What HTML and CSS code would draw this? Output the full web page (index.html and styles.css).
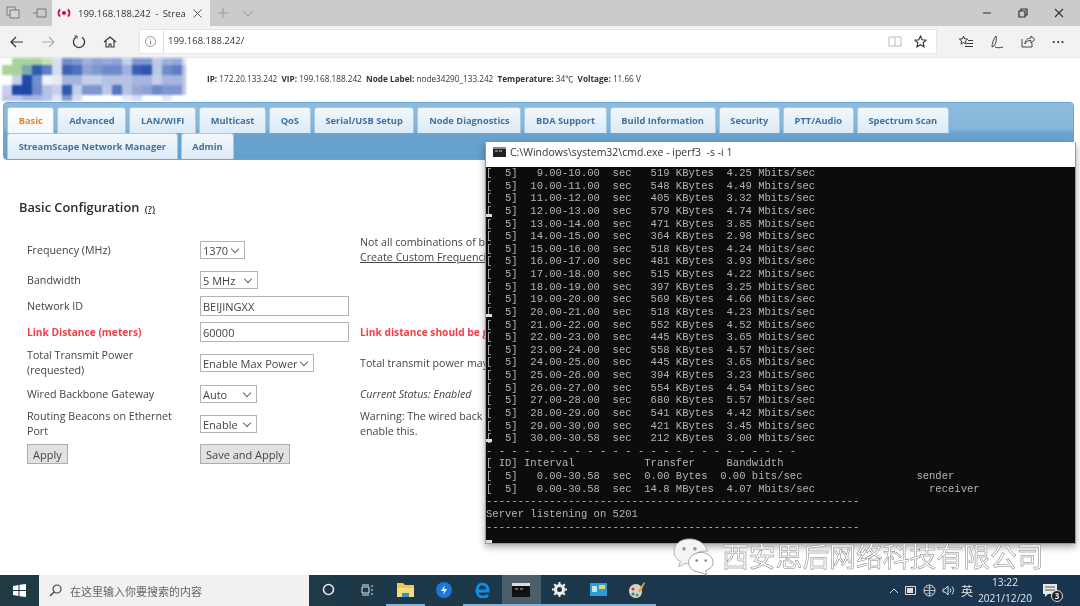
FILE: index.html
```html
<!DOCTYPE html>
<html lang="en">
<head>
    <meta charset="UTF-8">
    <title>199.168.188.242 - StreamScape</title>
    <link rel="stylesheet" href="styles.css">
</head>
<body>
<div class="screen">
    <!-- browser chrome -->
    <div class="tabstrip">
        <svg class="strip-icon" width="16" height="14" viewBox="0 0 16 14"><path d="M2 1h8v3M2 1v8h3M5 4h9v8H5z" fill="#d4d4d4" stroke="#777"/></svg>
        <svg class="strip-icon second" width="16" height="14" viewBox="0 0 16 14"><path d="M1 7h4M5 3h9v8H5z" fill="none" stroke="#777"/></svg>
        <div class="browser-tab">
            <svg width="14" height="10" viewBox="0 0 14 10"><circle cx="7" cy="5" r="2" fill="#c8103c"/><path d="M3 1.500a5 5 0 0 0 0 7M11 1.500a5 5 0 0 1 0 7" fill="none" stroke="#c8103c" stroke-width="2"/></svg>
            <span class="tab-title">199.168.188.242 - Strea</span>
            <svg width="9" height="9" viewBox="0 0 9 9"><path d="M.5.5l8 8M8.500.5l-8 8" stroke="#555"/></svg>
        </div>
        <svg class="new-tab" width="12" height="12" viewBox="0 0 12 12"><path d="M6 1v10M1 6h10" stroke="#999"/></svg>
        <svg class="tab-list" width="12" height="7" viewBox="0 0 12 7"><path d="M1 1l5 5 5-5" fill="none" stroke="#999"/></svg>
        <div class="win-buttons">
            <svg width="10" height="10" viewBox="0 0 10 10"><path d="M1 5h8" stroke="#444" stroke-width="1.200"/></svg>
            <svg width="10" height="10" viewBox="0 0 10 10"><path d="M1 3h6v6H1zM3 3V1h6v6H7" fill="none" stroke="#333" stroke-width="1.200"/></svg>
            <svg width="10" height="10" viewBox="0 0 10 10"><path d="M1 1l8 8M9 1l-8 8" stroke="#333" stroke-width="1.100"/></svg>
        </div>
    </div>
    <div class="toolbar">
        <svg class="nav-icon" width="14" height="12" viewBox="0 0 14 12"><path d="M13 6H1M6 1L1 6l5 5" fill="none" stroke="#333" stroke-width="1.200"/></svg>
        <svg class="nav-icon" width="14" height="12" viewBox="0 0 14 12"><path d="M1 6h12M8 1l5 5-5 5" fill="none" stroke="#aaa" stroke-width="1.100"/></svg>
        <svg class="nav-icon" width="14" height="14" viewBox="0 0 14 14"><path d="M4 2.200a5.600 5.600 0 1 0 6 0" fill="none" stroke="#333" stroke-width="1.200"/><path d="M2.500 1h2.500v2.500" fill="none" stroke="#333"/></svg>
        <svg class="nav-icon" width="14" height="14" viewBox="0 0 14 14"><path d="M1 7l6-5 6 5M3 6v6h3V9h2v3h3V6" fill="none" stroke="#333" stroke-width="1.100"/></svg>
        <div class="address">
            <svg width="11" height="11" viewBox="0 0 11 11"><circle cx="5.500" cy="5.500" r="5" fill="none" stroke="#999"/><path d="M5.500 4.500v4M5.500 2.500v1" stroke="#888"/></svg>
            <span class="url">199.168.188.242/</span>
            <svg class="addr-book" width="14" height="11" viewBox="0 0 14 11"><path d="M1 1h12v9H1zM7 1v9" fill="none" stroke="#bbb"/></svg>
            <svg width="13" height="13" viewBox="0 0 13 13"><path d="M6.500 1l1.700 3.700 4 .4-3 2.700.9 4-3.600-2.100-3.600 2.100.9-4-3-2.700 4-.4z" fill="none" stroke="#333" stroke-width="1.100"/></svg>
        </div>
        <div class="tools">
            <svg width="14" height="13" viewBox="0 0 14 13"><path d="M4.500 1l1.200 2.800 3 .3-2.200 2 .6 3-2.600-1.600L2 9.100l.6-3-2.200-2 3-.3zM9 5.500h5M8 8.500h6M6 11.500h8" fill="none" stroke="#333"/></svg>
            <svg width="14" height="14" viewBox="0 0 14 14"><path d="M6 1C3 5 2 9 2 12l2-1c2-3 3-6 2-10zM5 12c2 1 5 1 8 0" fill="none" stroke="#444"/></svg>
            <svg width="14" height="13" viewBox="0 0 14 13"><path d="M1 4v8h10V8M4 9c0-4 3-6 6-6V1l4 3.500L10 8V5.500c-3 0-5 1-6 3.500z" fill="none" stroke="#444"/></svg>
            <span class="more">&middot;&middot;&middot;</span>
        </div>
    </div>

    <!-- device page -->
    <div class="page">
        <div class="page-head">
            <!-- logo is pixelated in the screenshot -->
            <svg class="logo-mosaic" width="186" height="44" viewBox="0 0 186 44" shape-rendering="crispEdges">
                <g>
                    <rect x="12" y="0" width="30" height="7" fill="#a9d39a"/><rect x="42" y="0" width="10" height="7" fill="#c5dfbd"/><rect x="52" y="0" width="10" height="7" fill="#d8deef"/><rect x="62" y="0" width="10" height="7" fill="#6f8acb"/><rect x="72" y="0" width="10" height="7" fill="#7f97d0"/><rect x="82" y="0" width="10" height="7" fill="#9fb0dd"/><rect x="92" y="0" width="10" height="7" fill="#8ea2d5"/><rect x="102" y="0" width="10" height="7" fill="#98a9d9"/><rect x="112" y="0" width="10" height="7" fill="#8ea2d5"/><rect x="122" y="0" width="10" height="7" fill="#c5cfe9"/><rect x="132" y="0" width="20" height="7" fill="#7f97d0"/><rect x="152" y="0" width="10" height="7" fill="#bcc8e6"/><rect x="162" y="0" width="10" height="7" fill="#9fb0dd"/><rect x="172" y="0" width="10" height="7" fill="#98a9d9"/><rect x="182" y="0" width="4" height="7" fill="#d5dcef"/>
                </g>
                <g>
                    <rect x="2" y="7" width="20" height="10" fill="#a9d39a"/><rect x="22" y="7" width="10" height="10" fill="#7ea6b4"/><rect x="32" y="7" width="10" height="10" fill="#2f5cad"/><rect x="42" y="7" width="10" height="10" fill="#5f7dc3"/><rect x="52" y="7" width="10" height="10" fill="#d5dcef"/><rect x="62" y="7" width="10" height="10" fill="#3f62b5"/><rect x="72" y="7" width="10" height="10" fill="#4f70bc"/><rect x="82" y="7" width="10" height="10" fill="#8ea2d5"/><rect x="92" y="7" width="10" height="10" fill="#7f97d0"/><rect x="102" y="7" width="20" height="10" fill="#6f8acb"/><rect x="122" y="7" width="10" height="10" fill="#a0b0dd"/><rect x="132" y="7" width="10" height="10" fill="#3a60b5"/><rect x="142" y="7" width="10" height="10" fill="#2e54ab"/><rect x="152" y="7" width="10" height="10" fill="#bcc8e6"/><rect x="162" y="7" width="10" height="10" fill="#6f8acb"/><rect x="172" y="7" width="10" height="10" fill="#5f7dc3"/><rect x="182" y="7" width="4" height="10" fill="#b5c2e3"/>
                </g>
                <g>
                    <rect x="12" y="17" width="10" height="10" fill="#c5d0ea"/><rect x="22" y="17" width="10" height="10" fill="#1f49a6"/><rect x="32" y="17" width="10" height="10" fill="#6f8fd0"/><rect x="42" y="17" width="10" height="10" fill="#f0f3fa"/><rect x="52" y="17" width="10" height="10" fill="#e5e9f5"/><rect x="62" y="17" width="20" height="10" fill="#a5b5de"/><rect x="82" y="17" width="20" height="10" fill="#c5cfe9"/><rect x="102" y="17" width="30" height="10" fill="#b5c2e3"/><rect x="132" y="17" width="20" height="10" fill="#a5b5de"/><rect x="152" y="17" width="10" height="10" fill="#c5cfe9"/><rect x="162" y="17" width="20" height="10" fill="#a5b5de"/><rect x="182" y="17" width="4" height="10" fill="#bcc8e6"/>
                </g>
                <g>
                    <rect x="2" y="27" width="10" height="10" fill="#c5d0ea"/><rect x="12" y="27" width="10" height="10" fill="#1f49a6"/><rect x="22" y="27" width="10" height="10" fill="#1c47a5"/><rect x="32" y="27" width="10" height="10" fill="#6f8acb"/><rect x="42" y="27" width="10" height="10" fill="#b5c2e3"/><rect x="52" y="27" width="10" height="10" fill="#c5cfe9"/><rect x="62" y="27" width="10" height="10" fill="#2f59ae"/><rect x="72" y="27" width="10" height="10" fill="#c5cfe9"/><rect x="82" y="27" width="20" height="10" fill="#7f97d0"/><rect x="102" y="27" width="10" height="10" fill="#bcc8e6"/><rect x="112" y="27" width="10" height="10" fill="#5577c0"/><rect x="122" y="27" width="10" height="10" fill="#b5c2e3"/><rect x="132" y="27" width="10" height="10" fill="#98a9d9"/><rect x="142" y="27" width="10" height="10" fill="#8ea2d5"/><rect x="152" y="27" width="10" height="10" fill="#6f8acb"/><rect x="162" y="27" width="20" height="10" fill="#7f97d0"/><rect x="182" y="27" width="4" height="10" fill="#bcc8e6"/>
                </g>
                <g>
                    <rect x="2" y="37" width="20" height="6" fill="#bcc8e6"/><rect x="22" y="37" width="20" height="6" fill="#a5b5de"/><rect x="42" y="37" width="10" height="6" fill="#b5c2e3"/><rect x="52" y="37" width="10" height="6" fill="#e0e5f3"/><rect x="62" y="37" width="10" height="6" fill="#7f97d0"/><rect x="72" y="37" width="10" height="6" fill="#d5dcef"/><rect x="122" y="37" width="10" height="6" fill="#e5e9f5"/><rect x="132" y="37" width="10" height="6" fill="#d5dcef"/><rect x="162" y="37" width="10" height="6" fill="#e5e9f5"/>
                </g>
            </svg>
            <p class="node-info"><b>IP:</b> 172.20.133.242 &nbsp;<b>VIP:</b> 199.168.188.242 &nbsp;<b>Node Label:</b> node34290_133.242 &nbsp;<b>Temperature:</b> 34&#8451; &nbsp;<b>Voltage:</b> 11.66 V</p>
        </div>

        <nav class="menu">
            <a class="menu-tab active">Basic</a>
            <a class="menu-tab">Advanced</a>
            <a class="menu-tab">LAN/WIFI</a>
            <a class="menu-tab">Multicast</a>
            <a class="menu-tab">QoS</a>
            <a class="menu-tab">Serial/USB Setup</a>
            <a class="menu-tab">Node Diagnostics</a>
            <a class="menu-tab">BDA Support</a>
            <a class="menu-tab">Build Information</a>
            <a class="menu-tab">Security</a>
            <a class="menu-tab">PTT/Audio</a>
            <a class="menu-tab">Spectrum Scan</a>
            <a class="menu-tab">StreamScape Network Manager</a>
            <a class="menu-tab">Admin</a>
        </nav>

        <h2 class="section-title">Basic Configuration <a class="help">(?)</a></h2>

        <div class="config">
            <label>Frequency (MHz)</label>
            <div><span class="select w45">1370</span></div>
            <div class="note">Not all combinations of b<br><a class="link">Create Custom Frequenci</a></div>

            <label>Bandwidth</label>
            <div><span class="select w58">5 MHz</span></div>
            <div></div>

            <label>Network ID</label>
            <div><span class="field">BEIJINGXX</span></div>
            <div></div>

            <label class="warn">Link Distance (meters)</label>
            <div><span class="field">60000</span></div>
            <div class="note warn">Link distance should be g</div>

            <label>Total Transmit Power<br>(requested)</label>
            <div><span class="select w114">Enable Max Power</span></div>
            <div class="note">Total transmit power may</div>

            <label>Wired Backbone Gateway</label>
            <div><span class="select w57">Auto</span></div>
            <div class="note"><i>Current Status: Enabled</i></div>

            <label>Routing Beacons on Ethernet<br>Port</label>
            <div><span class="select w57">Enable</span></div>
            <div class="note">Warning: The wired back<br>enable this.</div>

            <div><button class="btn">Apply</button></div>
            <div><button class="btn">Save and Apply</button></div>
            <div></div>
        </div>
    </div>

    <!-- taskbar -->
    <div class="taskbar">
        <div class="start">
            <svg width="13" height="13" viewBox="0 0 13 13"><path d="M0 2l5.500-1v5H0zM6.500.8L13 0v6H6.500zM0 7h5.500v5L0 11zM6.500 7H13v6l-6.500-.8z" fill="#fff"/></svg>
        </div>
        <div class="search">
            <svg width="13" height="13" viewBox="0 0 13 13"><circle cx="8" cy="5" r="4" fill="none" stroke="#444" stroke-width="1.200"/><path d="M5 8l-4 4" stroke="#444" stroke-width="1.400"/></svg>
            <span>在这里输入你要搜索的内容</span>
        </div>
        <div class="task-apps">
            <span class="app"><svg width="13" height="13" viewBox="0 0 13 13"><circle cx="6.500" cy="6.500" r="5" fill="none" stroke="#e8e8e8" stroke-width="1.600"/></svg></span>
            <span class="app"><svg width="14" height="12" viewBox="0 0 14 12"><path d="M2 1h7M2 11h7M2 3h7v6H2zM12 1v2M12 5v2M12 9v2" fill="none" stroke="#e8e8e8"/></svg></span>
            <span class="app on"><svg width="17" height="14" viewBox="0 0 17 14"><path d="M0 0h6l2 2h9v12H0z" fill="#f2c84b"/><path d="M0 5h17v9H0z" fill="#f8dc7a"/><path d="M5 10h7v4H5z" fill="#3b8fd4"/></svg></span>
            <span class="app"><svg width="16" height="16" viewBox="0 0 16 16"><circle cx="8" cy="8" r="8" fill="#1877d8"/><path d="M9 3L5 9h3l-1 4 4-6H8z" fill="#fff"/></svg></span>
            <span class="app on"><svg width="16" height="16" viewBox="0 0 16 16"><path d="M2 9h11c0-4-2-7-6-7C4 2 2 5 2 9c0 4 3 6 6 6 2 0 4-.6 5-2" fill="none" stroke="#0f8ee8" stroke-width="3"/></svg></span>
            <span class="app on current"><svg width="18" height="14" viewBox="0 0 18 14"><path d="M0 0h18v14H0z" fill="#111"/><path d="M0 0h18v3H0z" fill="#ddd"/><path d="M3 6h3M8 6h3" stroke="#bbb"/></svg></span>
            <span class="app on"><svg width="15" height="15" viewBox="0 0 15 15"><circle cx="7.500" cy="7.500" r="4" fill="none" stroke="#eee" stroke-width="3"/><path d="M7.500 0v3M7.500 12v3M0 7.500h3M12 7.500h3M2.200 2.200l2 2M10.800 10.800l2 2M12.800 2.200l-2 2M4.200 10.800l-2 2" stroke="#eee" stroke-width="2"/></svg></span>
            <span class="app on"><svg width="17" height="13" viewBox="0 0 17 13"><path d="M0 0h17v13H0z" fill="#2f9ad8"/><path d="M9 2h6v4H9z" fill="#f1d26a"/><path d="M2 3h5v6H2z" fill="#bfe4f7"/></svg></span>
            <span class="app on"><svg width="18" height="18" viewBox="0 0 18 18"><path d="M8 3c-4 0-7 3-7 7s3 7 7 7 6-3 6-7-2-7-6-7z" fill="#d8d3c4"/><circle cx="5" cy="8" r="1.500" fill="#d33"/><circle cx="5" cy="13" r="1.500" fill="#37c"/><circle cx="9" cy="14" r="1.500" fill="#3a5"/><path d="M10 10l6-9 1 1-5 10z" fill="#e8a33a"/></svg></span>
        </div>
        <div class="tray">
            <svg width="10" height="6" viewBox="0 0 10 6"><path d="M1 5l4-4 4 4" fill="none" stroke="#ddd"/></svg>
            <svg width="12" height="9" viewBox="0 0 12 9"><path d="M.5.500h10v8H.5z" fill="none" stroke="#ddd"/><path d="M2 2h6v5H2z" fill="#ddd"/></svg>
            <svg width="13" height="13" viewBox="0 0 13 13"><circle cx="6.500" cy="6.500" r="5.500" fill="none" stroke="#ddd"/><path d="M1 6.500h11M6.500 1v11M3 2.500c2 2 5 2 7 0M3 10.500c2-2 5-2 7 0" fill="none" stroke="#ddd" stroke-width=".8"/></svg>
            <svg width="13" height="11" viewBox="0 0 13 11"><path d="M1 4v3h2l3 3V1L3 4zM8 3.500a3 3 0 0 1 0 4M10 1.500a6 6 0 0 1 0 8" fill="none" stroke="#ddd"/></svg>
            <span class="ime">英</span>
            <div class="clock">13:22<br>2021/12/20</div>
            <span class="notify">
                <svg width="14" height="13" viewBox="0 0 14 13"><path d="M0 0h14v10H5l-3 3v-3H0z" fill="#e8e8e8"/><path d="M2 3h10M2 6h10" stroke="#555"/></svg>
                <b class="count">3</b>
            </span>
        </div>
    </div>

    <!-- terminal window, sits on top of the page -->
    <div class="cmd">
        <div class="cmd-title">
            <svg width="13" height="10" viewBox="0 0 13 10"><path d="M0 0h13v10H0z" fill="#222"/><path d="M0 0h13v2H0z" fill="#888"/><path d="M2 4h3M6 4h3" stroke="#ccc"/></svg>
            <span>C:\Windows\system32\cmd.exe - iperf3  -s -i 1</span>
        </div>
<pre class="cmd-body">[  5]   9.00-10.00  sec   519 KBytes  4.25 Mbits/sec
[  5]  10.00-11.00  sec   548 KBytes  4.49 Mbits/sec
[  5]  11.00-12.00  sec   405 KBytes  3.32 Mbits/sec
[  5]  12.00-13.00  sec   579 KBytes  4.74 Mbits/sec
[  5]  13.00-14.00  sec   471 KBytes  3.85 Mbits/sec
[  5]  14.00-15.00  sec   364 KBytes  2.98 Mbits/sec
[  5]  15.00-16.00  sec   518 KBytes  4.24 Mbits/sec
[  5]  16.00-17.00  sec   481 KBytes  3.93 Mbits/sec
[  5]  17.00-18.00  sec   515 KBytes  4.22 Mbits/sec
[  5]  18.00-19.00  sec   397 KBytes  3.25 Mbits/sec
[  5]  19.00-20.00  sec   569 KBytes  4.66 Mbits/sec
[  5]  20.00-21.00  sec   518 KBytes  4.23 Mbits/sec
[  5]  21.00-22.00  sec   552 KBytes  4.52 Mbits/sec
[  5]  22.00-23.00  sec   445 KBytes  3.65 Mbits/sec
[  5]  23.00-24.00  sec   558 KBytes  4.57 Mbits/sec
[  5]  24.00-25.00  sec   445 KBytes  3.65 Mbits/sec
[  5]  25.00-26.00  sec   394 KBytes  3.23 Mbits/sec
[  5]  26.00-27.00  sec   554 KBytes  4.54 Mbits/sec
[  5]  27.00-28.00  sec   680 KBytes  5.57 Mbits/sec
[  5]  28.00-29.00  sec   541 KBytes  4.42 Mbits/sec
[  5]  29.00-30.00  sec   421 KBytes  3.45 Mbits/sec
[  5]  30.00-30.58  sec   212 KBytes  3.00 Mbits/sec
- - - - - - - - - - - - - - - - - - - - - - - - -
[ ID] Interval           Transfer     Bandwidth
[  5]   0.00-30.58  sec  0.00 Bytes  0.00 bits/sec                  sender
[  5]   0.00-30.58  sec  14.8 MBytes  4.07 Mbits/sec                  receiver
-----------------------------------------------------------
Server listening on 5201
-----------------------------------------------------------</pre>
        <span class="tick t1"></span><span class="tick t2"></span><span class="tick t3"></span><span class="tick t4"></span>
    </div>

    <!-- watermark -->
    <div class="watermark">
        <svg width="44" height="38" viewBox="0 0 46 42">
            <path d="M18 1C8 1 1 7 1 15c0 5 3 9 7 11l-2 6 7-4c2 .6 3 .6 5 .6h2c-1-9 6-15 18-14C36 7 28 1 18 1z" fill="#f4f4f4" stroke="#aaa"/>
            <path d="M31 16c-8 0-14 5-14 11s6 11 14 11l6 3-1-5c5-2 8-5 8-9 0-6-6-11-13-11z" fill="#fff" stroke="#999"/>
            <circle cx="12" cy="12" r="2" fill="#999"/><circle cx="24" cy="12" r="2" fill="#999"/>
            <circle cx="26" cy="25" r="1.500" fill="#888"/><circle cx="36" cy="25" r="1.500" fill="#888"/>
        </svg>
        <span>西安思后网络科技有限公司</span>
    </div>
</div>
</body>
</html>
```
FILE: styles.css
```css
* {
    margin: 0;
    padding: 0;
    box-sizing: border-box;
}

html, body {
    width: 1080px;
    height: 606px;
    overflow: hidden;
}

body {
    background: #fff;
    font-family: "Open Sans", "Noto Sans CJK SC", sans-serif;
    color: #333;
}

.screen {
    position: relative;
    width: 1080px;
    height: 606px;
    overflow: hidden;
    display: flex;
    flex-direction: column;
    filter: blur(0.45px);
}

/* Browser chrome */
.tabstrip {
    display: flex;
    align-items: center;
    height: 26px;
    background: #cbcbcb;
    flex: none;
}

.strip-icon {
    margin-left: 5px;
}

.strip-icon.second {
    margin-left: 11px;
    margin-right: 2px;
}

.browser-tab {
    display: flex;
    align-items: center;
    align-self: stretch;
    width: 158px;
    margin-left: 2px;
    padding: 0 8px 0 5px;
    gap: 7px;
    background: #f2f2f2;
    font-size: 9.500px;
    color: #333;
}

.tab-title {
    flex: 1;
    white-space: nowrap;
    word-spacing: 2px;
}

.new-tab {
    margin-left: 7px;
}

.tab-list {
    margin-left: 13px;
}

.win-buttons {
    display: flex;
    margin-left: auto;
    margin-right: 16px;
    gap: 26px;
    align-items: center;
}

.toolbar {
    display: flex;
    align-items: center;
    height: 32px;
    background: #f2f2f2;
    border-bottom: 1px solid #e8e8e8;
    padding-left: 10px;
    flex: none;
}

.nav-icon {
    margin-right: 17px;
}

.address {
    display: flex;
    align-items: center;
    width: 798px;
    height: 25px;
    margin-left: 5px;
    padding: 0 9px 0 5px;
    background: #fff;
    border: 1px solid #e6e6e6;
    gap: 7px;
}

.url {
    flex: 1;
    font-size: 9.500px;
    border-left: 1px solid #ddd;
    padding: 0 0 3px 4px;
    line-height: 19px;
}

.addr-book {
    margin-right: 5px;
}

.tools {
    display: flex;
    align-items: center;
    gap: 17px;
    margin-left: 22px;
}

.more {
    font-size: 12px;
    font-weight: 700;
    letter-spacing: 1px;
}

/* Device page */
.page {
    flex: 1;
    background: #fff;
    min-height: 0;
}

.page-head {
    display: flex;
    height: 44px;
    align-items: center;
}

.logo-mosaic {
    flex: none;
    filter: blur(1px);
}

.node-info {
    margin: 0 0 4px 21px;
    font-size: 8.200px;
    white-space: pre;
    color: #333;
}

.menu {
    display: flex;
    flex-wrap: wrap;
    gap: 0 3px;
    width: 1071px;
    height: 58px;
    margin-left: 3px;
    padding: 4px 3px 0;
    border: 1px solid #6aa6d2;
    border-radius: 4px;
    background: linear-gradient(#8ebbdd, #86b5da 45%, #6aa3cf 55%, #659fcd);
}

.menu-tab {
    display: flex;
    align-items: center;
    height: 26px;
    padding: 0 10.700px 1px;
    border: 1px solid #a6cbe6;
    border-bottom: 0;
    border-radius: 3px 3px 0 0;
    background: linear-gradient(#f2f8fc, #dbeaf6);
    font-size: 9.300px;
    font-weight: 700;
    color: #41729f;
}

.menu-tab.active {
    background: linear-gradient(#fff, #f2f7fb);
    color: #e8842f;
}

.section-title {
    margin: 38px 0 0 19px;
    font-size: 12.800px;
    line-height: 18px;
    font-weight: 600;
    color: #2b2b2b;
}

.help {
    font-size: 9.500px;
    text-decoration: underline;
    margin-left: 2px;
}

.config {
    display: grid;
    grid-template-columns: 173px 160px 1fr;
    grid-template-rows: 30px 22px 22px 22px 32px 22px 30px 22px;
    gap: 4px 0;
    margin: 17px 0 0 27px;
    font-size: 10.700px;
    line-height: 15px;
    color: #444;
    align-items: center;
}

.warn {
    color: #f2404a;
    font-weight: 700;
    font-size: 10.200px;
}

.note {
    white-space: nowrap;
}

.link {
    text-decoration: underline;
}

.select,
.field {
    display: flex;
    align-items: center;
    height: 18px;
    border: 1px solid #b4b4b4;
    padding-left: 2px;
    background: #fff;
    color: #444;
    font-size: 11px;
    position: relative;
}

.select::after {
    content: "";
    position: absolute;
    right: 6px;
    top: 4px;
    width: 5px;
    height: 5px;
    border-right: 1px solid #666;
    border-bottom: 1px solid #666;
    transform: rotate(45deg);
}

.field {
    width: 149px;
    height: 20px;
    padding-left: 2px;
}

.w45 { width: 45px; }
.w58 { width: 58px; }
.w57 { width: 57px; }
.w114 { width: 114px; }

.btn {
    height: 20px;
    padding: 0 5px;
    background: #e1e1e1;
    border: 1px solid #adadad;
    font: inherit;
    font-size: 11px;
    color: #444;
}

/* Taskbar */
.taskbar {
    display: flex;
    align-items: stretch;
    height: 31px;
    flex: none;
    background: linear-gradient(90deg, #1f3a44, #1a3550);
    color: #e8e8e8;
}

.start {
    display: flex;
    align-items: center;
    justify-content: center;
    width: 39px;
}

.search {
    display: flex;
    align-items: center;
    gap: 8px;
    width: 270px;
    padding-left: 10px;
    background: #f1f1f1;
    color: #666;
    font-size: 11px;
}

.task-apps {
    display: flex;
}

.app {
    display: flex;
    align-items: center;
    justify-content: center;
    width: 38.600px;
    border-bottom: 2px solid transparent;
}

.app.on {
    border-bottom-color: #7fb3d8;
}

.app.current {
    background: #4a5f6a;
}

.tray {
    display: flex;
    align-items: center;
    margin-left: auto;
    gap: 6px;
    padding-right: 23px;
}

.ime {
    font-size: 12px;
}

.clock {
    width: 56px;
    margin-left: -2px;
    text-align: center;
    font-size: 10.200px;
    line-height: 15.500px;
}

.notify {
    position: relative;
    margin-left: 4px;
    display: flex;
}

.count {
    position: absolute;
    right: -6px;
    bottom: -5px;
    width: 12px;
    height: 12px;
    border: 1px solid #ddd;
    border-radius: 50%;
    background: #222;
    font-size: 8px;
    line-height: 10px;
    text-align: center;
}

/* Terminal */
.cmd {
    position: absolute;
    left: 485px;
    top: 142px;
    width: 591px;
    height: 402px;
    background: #0c0c0c;
    border: 1px solid #9a9a9a;
    border-top: 0;
    box-shadow: 0 3px 7px rgba(0, 0, 0, 0.35);
}

.cmd-title {
    display: flex;
    align-items: center;
    gap: 4px;
    height: 25px;
    padding: 0 0 5px 7px;
    background: #fff;
    color: #333;
    font-size: 10.500px;
    white-space: pre;
}

.cmd-body {
    font-family: "Liberation Mono", monospace;
    font-size: 10.550px;
    line-height: 12.620px;
    color: #b4b4b4;
    white-space: pre;
}

.tick {
    position: absolute;
    left: 0;
    width: 6px;
    height: 3px;
    background: #ddd;
}

.t1 { top: 72px; }
.t2 { top: 172px; }
.t3 { top: 297px; }
.t4 { top: 398px; }

/* Watermark */
.watermark {
    position: absolute;
    left: 672px;
    top: 537px;
    display: flex;
    align-items: center;
    gap: 6px;
    font-size: 26.800px;
    line-height: 40px;
    color: #fff;
    -webkit-text-stroke: 0.5px #808080;
    white-space: nowrap;
}
```
